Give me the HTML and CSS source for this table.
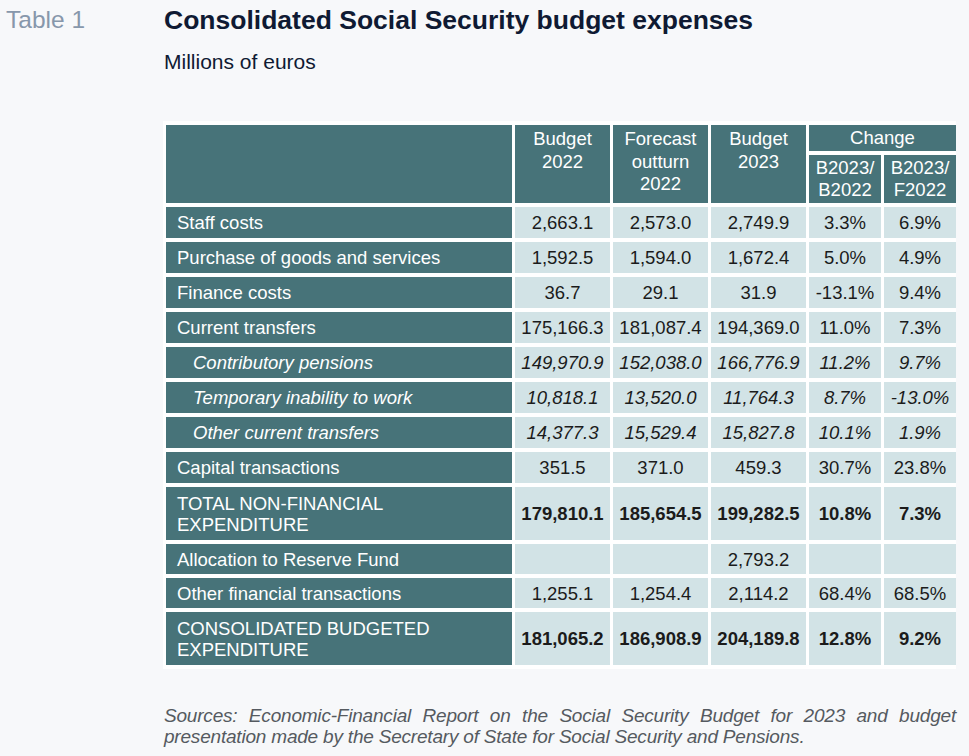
FILE: index.html
```html
<!DOCTYPE html>
<html lang="en">
<head>
<meta charset="utf-8">
<title>Table 1</title>
<link rel="stylesheet" href="styles.css">
</head>
<body>
<div class="page">
  <div class="tag">Table 1</div>
  <div class="main">
    <h1 class="title">Consolidated Social Security budget expenses</h1>
    <p class="subtitle">Millions of euros</p>
    <div class="box">
      <table class="data">
        <colgroup>
          <col class="c-label"><col class="c-num"><col class="c-num"><col class="c-num"><col class="c-pct"><col class="c-pct">
        </colgroup>
        <thead>
          <tr class="h1">
            <th rowspan="2"></th>
            <th rowspan="2" class="top">Budget<br>2022</th>
            <th rowspan="2" class="top">Forecast<br>outturn<br>2022</th>
            <th rowspan="2" class="top">Budget<br>2023</th>
            <th colspan="2" class="change">Change</th>
          </tr>
          <tr class="h2">
            <th class="sub">B2023/<br>B2022</th>
            <th class="sub">B2023/<br>F2022</th>
          </tr>
        </thead>
        <tbody>
          <tr><th>Staff costs</th><td>2,663.1</td><td>2,573.0</td><td>2,749.9</td><td>3.3%</td><td>6.9%</td></tr>
          <tr><th>Purchase of goods and services</th><td>1,592.5</td><td>1,594.0</td><td>1,672.4</td><td>5.0%</td><td>4.9%</td></tr>
          <tr><th>Finance costs</th><td>36.7</td><td>29.1</td><td>31.9</td><td>-13.1%</td><td>9.4%</td></tr>
          <tr><th>Current transfers</th><td>175,166.3</td><td>181,087.4</td><td>194,369.0</td><td>11.0%</td><td>7.3%</td></tr>
          <tr class="it"><th>Contributory pensions</th><td>149,970.9</td><td>152,038.0</td><td>166,776.9</td><td>11.2%</td><td>9.7%</td></tr>
          <tr class="it"><th>Temporary inability to work</th><td>10,818.1</td><td>13,520.0</td><td>11,764.3</td><td>8.7%</td><td>-13.0%</td></tr>
          <tr class="it"><th>Other current transfers</th><td>14,377.3</td><td>15,529.4</td><td>15,827.8</td><td>10.1%</td><td>1.9%</td></tr>
          <tr><th>Capital transactions</th><td>351.5</td><td>371.0</td><td>459.3</td><td>30.7%</td><td>23.8%</td></tr>
          <tr class="tot"><th>TOTAL NON-FINANCIAL<br>EXPENDITURE</th><td>179,810.1</td><td>185,654.5</td><td>199,282.5</td><td>10.8%</td><td>7.3%</td></tr>
          <tr class="thin"><th>Allocation to Reserve Fund</th><td></td><td></td><td>2,793.2</td><td></td><td></td></tr>
          <tr class="thin"><th>Other financial transactions</th><td>1,255.1</td><td>1,254.4</td><td>2,114.2</td><td>68.4%</td><td>68.5%</td></tr>
          <tr class="tot"><th>CONSOLIDATED BUDGETED<br>EXPENDITURE</th><td>181,065.2</td><td>186,908.9</td><td>204,189.8</td><td>12.8%</td><td>9.2%</td></tr>
        </tbody>
      </table>
    </div>
    <p class="source">Sources: Economic-Financial Report on the Social Security Budget for 2023 and budget presentation made by the Secretary of State for Social Security and Pensions.</p>
  </div>
</div>
</body>
</html>
```

FILE: styles.css
```css
html, body {
  margin: 0;
  padding: 0;
  background: #f7f8fa;
}
body {
  font-family: "Liberation Sans", Arial, sans-serif;
  color: #1b1b1b;
}
.page {
  display: flex;
  width: 969px;
  height: 756px;
  overflow: hidden;
}
.tag {
  width: 160px;
  padding: 6px 0 0 6px;
  box-sizing: border-box;
  font-size: 24.5px;
  line-height: 28px;
  color: #8797ab;
}
.main {
  flex: 1;
  padding: 5px 13px 0 6px;
}
.title {
  margin: 0;
  font-size: 26.5px;
  line-height: 30px;
  font-weight: bold;
  color: #0f1a33;
}
.subtitle {
  margin: 15px 0 0 0;
  font-size: 21px;
  line-height: 24px;
  color: #0f1a33;
}
.box {
  margin-top: 48px;
  margin-left: -1px;
  width: 793px;
  background: #ffffff;
  padding: 0;
}
.data {
  border-collapse: separate;
  border-spacing: 3px 4px;
  table-layout: fixed;
  width: 793px;
  margin: -1px 0;
  font-size: 18.5px;
}
.c-label { width: 346px; }
.c-num { width: 95px; }
.c-pct { width: 72px; }
.data th,
.data td {
  padding: 0;
  font-weight: normal;
}
.data thead th {
  background: #477379;
  color: #ffffff;
  text-align: center;
  line-height: 22.5px;
}
.data thead th.top {
  vertical-align: top;
  padding-top: 3px;
}
.h1 { height: 26px; }
.h2 { height: 48px; }
.data thead th.change { vertical-align: middle; }
.data thead th.sub { vertical-align: middle; line-height: 22px; }
.data tbody th {
  background: #477379;
  color: #ffffff;
  text-align: left;
  padding-left: 11px;
  line-height: 21px;
}
.data tbody td {
  background: #d2e3e6;
  text-align: center;
  line-height: 21px;
}
.data tbody tr { height: 31px; }
.data tbody tr.thin { height: 30px; }
.data tbody tr.tot { height: 53px; }
.data tbody tr.tot td { font-weight: bold; }
.data tbody tr.it th,
.data tbody tr.it td { font-style: italic; }
.data tbody tr.it th { padding-left: 27px; }
.source {
  margin: 37px 0 0 0;
  font-size: 19px;
  line-height: 21px;
  font-style: italic;
  color: #555a60;
  text-align: justify;
  letter-spacing: -0.2px;
}
```
